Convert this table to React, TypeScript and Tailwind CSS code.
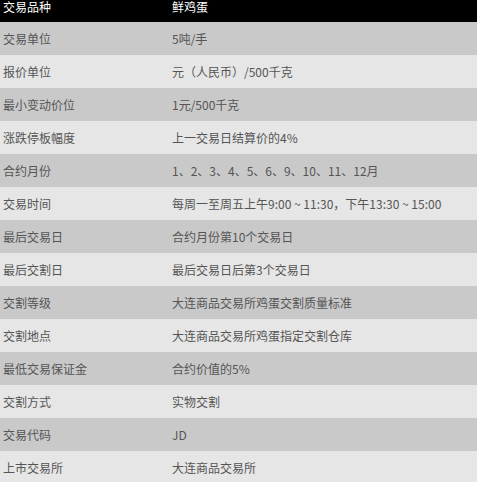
import React from 'react';

const rows: [string, string][] = [
  ['交易单位', '5吨/手'],
  ['报价单位', '元（人民币）/500千克'],
  ['最小变动价位', '1元/500千克'],
  ['涨跌停板幅度', '上一交易日结算价的4%'],
  ['合约月份', '1、2、3、4、5、6、9、10、11、12月'],
  ['交易时间', '每周一至周五上午9:00 ~ 11:30，下午13:30 ~ 15:00'],
  ['最后交易日', '合约月份第10个交易日'],
  ['最后交割日', '最后交易日后第3个交易日'],
  ['交割等级', '大连商品交易所鸡蛋交割质量标准'],
  ['交割地点', '大连商品交易所鸡蛋指定交割仓库'],
  ['最低交易保证金', '合约价值的5%'],
  ['交割方式', '实物交割'],
  ['交易代码', 'JD'],
  ['上市交易所', '大连商品交易所'],
];

export default function App() {
  return (
    <div className="w-[478px] h-[482px] overflow-hidden bg-white font-['Microsoft_YaHei','Noto_Sans_CJK_SC',sans-serif] text-[12px]">
      <div className="w-[477px]">
        {/* header row is scrolled partly out of view in the original */}
        <div className="h-[22px] overflow-hidden bg-black">
          <div className="-mt-[10px] h-[33px] grid grid-cols-[169px_1fr] items-center text-white">
            <div className="pl-[3px]">交易品种</div>
            <div className="pl-[3px]">鲜鸡蛋</div>
          </div>
        </div>
        {rows.map(([k, v], i) => (
          <div
            key={k}
            className={`h-[33px] grid grid-cols-[169px_1fr] items-center text-[#555] ${i % 2 === 0 ? 'bg-[#c9c9c9]' : 'bg-[#e6e6e6]'}`}
          >
            <div className="pl-[3px]">{k}</div>
            <div className="pl-[3px]">{v}</div>
          </div>
        ))}
      </div>
    </div>
  );
}
